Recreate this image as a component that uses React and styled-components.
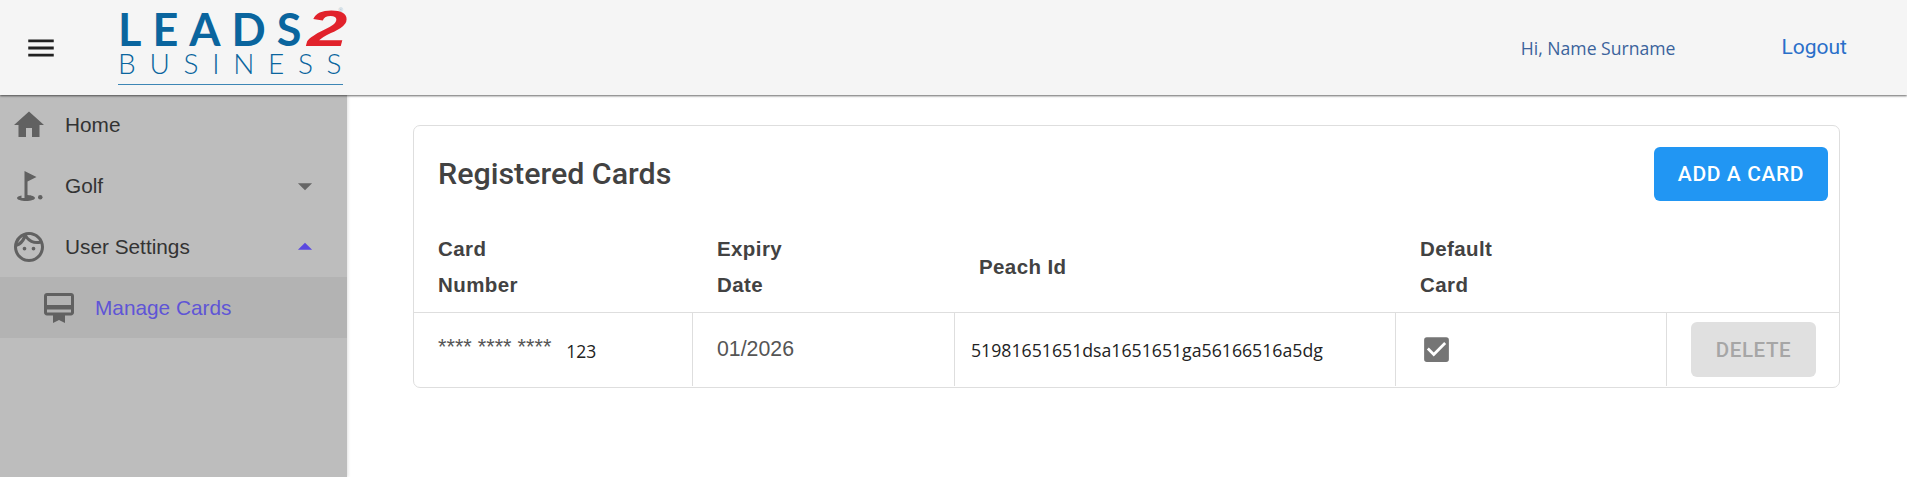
import React from "react";
import styled, { createGlobalStyle } from "styled-components";
import {
  MdMenu,
  MdHome,
  MdGolfCourse,
  MdOutlineFace,
  MdOutlineCardMembership,
  MdArrowDropDown,
  MdArrowDropUp,
  MdCheckBox,
} from "react-icons/md";

const GlobalStyle = createGlobalStyle`
  html, body {
    margin: 0;
    padding: 0;
    background: #fff;
    font-family: "Liberation Sans", Arial, sans-serif;
  }
  * {
    box-sizing: border-box;
  }
`;

const App = () => {
  return (
    <Page>
      <GlobalStyle />
      <Header>
        <MenuButton>
          <MdMenu size={34} />
        </MenuButton>
        <Logo>
          <LogoTop>
            <LogoLeads>
              LEAD<LogoLast>S</LogoLast>
            </LogoLeads>
            <LogoTwo>2</LogoTwo>
            <LogoMark>®</LogoMark>
          </LogoTop>
          <LogoBottom>BUSINESS</LogoBottom>
        </Logo>
        <Greeting>Hi, Name Surname</Greeting>
        <Logout>Logout</Logout>
      </Header>
      <Body>
        <Sidebar>
          <NavItem>
            <NavIcon>
              <MdHome size={36} />
            </NavIcon>
            <NavLabel>Home</NavLabel>
          </NavItem>
          <NavItem>
            <NavIcon>
              <MdGolfCourse size={36} />
            </NavIcon>
            <NavLabel>Golf</NavLabel>
            <Caret>
              <MdArrowDropDown size={34} />
            </Caret>
          </NavItem>
          <NavItem>
            <NavIcon>
              <MdOutlineFace size={36} />
            </NavIcon>
            <NavLabel>User Settings</NavLabel>
            <Caret $open>
              <MdArrowDropUp size={34} />
            </Caret>
          </NavItem>
          <NavItem $sub>
            <NavIcon>
              <MdOutlineCardMembership size={36} />
            </NavIcon>
            <NavLabel $active>Manage Cards</NavLabel>
          </NavItem>
        </Sidebar>
        <Main>
          <Card>
            <CardTop>
              <Title>Registered Cards</Title>
              <AddButton>ADD A CARD</AddButton>
            </CardTop>
            <HeadRow>
              <HeadCell>
                Card
                <br />
                Number
              </HeadCell>
              <HeadCell>
                Expiry
                <br />
                Date
              </HeadCell>
              <HeadCell>Peach Id</HeadCell>
              <HeadCell>
                Default
                <br />
                Card
              </HeadCell>
              <HeadCell />
            </HeadRow>
            <DataRow>
              <Cell>
                <Stars>**** **** ****</Stars>
                <LastDigits>123</LastDigits>
              </Cell>
              <Cell>
                <Expiry>01/2026</Expiry>
              </Cell>
              <Cell $tight>
                <PeachId>51981651651dsa1651651ga56166516a5dg</PeachId>
              </Cell>
              <Cell>
                <MdCheckBox size={33} color="#757575" />
              </Cell>
              <Cell $action>
                <DeleteButton disabled>DELETE</DeleteButton>
              </Cell>
            </DataRow>
          </Card>
        </Main>
      </Body>
    </Page>
  );
};

const Page = styled.div`
  display: flex;
  flex-direction: column;
  height: 100vh;
  overflow: hidden;
`;

const Header = styled.header`
  position: relative;
  z-index: 2;
  display: flex;
  align-items: center;
  flex: 0 0 95px;
  height: 95px;
  padding-left: 24px;
  background: #f5f5f5;
  box-shadow: 0 1px 2px rgba(0, 0, 0, 0.6);
`;

const MenuButton = styled.div`
  display: flex;
  width: 34px;
  height: 34px;
  margin-right: 60px;
  color: #212121;
`;

const Logo = styled.div`
  align-self: flex-start;
  width: 225px;
  height: 85px;
  padding-top: 5px;
  border-bottom: 1px solid #3d86b5;
  white-space: nowrap;
`;

const LogoTop = styled.div`
  display: flex;
  align-items: center;
  height: 48px;
`;

const LogoLeads = styled.span`
  font-family: "Lato", sans-serif;
  font-weight: 700;
  font-size: 45px;
  line-height: 48px;
  letter-spacing: 11px;
  color: #0a659e;
`;

// the 2 in the logo is much wider than any installed italic
const LogoTwo = styled.span`
  display: inline-block;
  width: 41px;
  margin-left: 6px;
  font-weight: 700;
  font-style: italic;
  font-size: 50px;
  line-height: 48px;
  color: #e1222b;
  transform: scaleX(1.45);
  transform-origin: left center;
`;

const LogoLast = styled.span`
  letter-spacing: 0;
`;

const LogoMark = styled.span`
  align-self: flex-start;
  margin-left: 2px;
  margin-top: 2px;
  font-size: 6px;
  color: #9bb7c9;
`;

const LogoBottom = styled.div`
  font-family: "Lato", sans-serif;
  font-weight: 300;
  font-size: 28px;
  line-height: 20px;
  letter-spacing: 13.7px;
  color: #0a659e;
`;

const Greeting = styled.div`
  margin-left: auto;
  margin-top: 1px;
  font-family: "Open Sans", sans-serif;
  font-size: 17.6px;
  color: #3b639c;
`;

const Logout = styled.div`
  margin-left: 106px;
  margin-right: 60px;
  margin-top: -2px;
  font-family: "Roboto", sans-serif;
  font-size: 21px;
  color: #2a6fc9;
`;

const Body = styled.div`
  display: flex;
  flex: 1;
  min-height: 0;
`;

const Sidebar = styled.nav`
  flex: 0 0 347px;
  background: #bdbdbd;
  box-shadow: 1px 0 3px rgba(0, 0, 0, 0.12);
`;

const NavItem = styled.div`
  display: flex;
  align-items: center;
  height: 61px;
  padding-left: ${(props) => (props.$sub ? "41px" : "11px")};
  background: ${(props) => (props.$sub ? "#b3b3b3" : "transparent")};

  &:first-child {
    height: 60px;
  }
`;

const NavIcon = styled.span`
  display: flex;
  width: 36px;
  margin-right: 18px;
  color: #616161;
`;

const NavLabel = styled.span`
  font-size: 20.8px;
  color: ${(props) => (props.$active ? "#5f55d6" : "#333")};
`;

const Caret = styled.span`
  display: flex;
  margin-left: auto;
  margin-right: 25px;
  color: ${(props) => (props.$open ? "#5a48e0" : "#666")};
`;

const Main = styled.main`
  flex: 1;
  padding: 30px 67px 0 66px;
`;

const Card = styled.section`
  height: 263px;
  border: 1px solid #dedede;
  border-radius: 7px;
  background: #fff;
`;

const CardTop = styled.div`
  display: flex;
  align-items: center;
  justify-content: space-between;
  height: 85px;
  padding: 10px 11px 0 24px;
`;

const Title = styled.h2`
  margin: 0;
  font-family: "Roboto", sans-serif;
  font-weight: 500;
  font-size: 30.4px;
  color: #424242;
`;

const AddButton = styled.button`
  width: 174px;
  height: 54px;
  border: 0;
  border-radius: 6px;
  background: #2196f3;
  color: #fff;
  font-family: "Roboto", sans-serif;
  font-weight: 500;
  font-size: 21px;
  letter-spacing: 0.6px;
`;

const columns = "279px 262px 441px 271px 1fr";

const HeadRow = styled.div`
  display: grid;
  grid-template-columns: ${columns};
  height: 102px;
  padding-top: 10px;
  border-bottom: 1px solid #dedede;
`;

const HeadCell = styled.div`
  align-self: center;
  padding-left: 24px;
  font-weight: 700;
  font-size: 20.5px;
  line-height: 36px;
  letter-spacing: 0.4px;
  color: #424242;
`;

const DataRow = styled.div`
  display: grid;
  grid-template-columns: ${columns};
  height: 73px;
`;

const Cell = styled.div`
  display: flex;
  align-items: center;
  padding-left: ${(props) => (props.$tight ? "16px" : "24px")};
  border-right: ${(props) => (props.$action ? "0" : "1px solid #dedede")};
`;

const Stars = styled.span`
  margin-top: -6px;
  font-size: 21.7px;
  color: #555;
`;

const LastDigits = styled.span`
  margin-left: 15px;
  margin-top: 2px;
  font-family: "Open Sans", sans-serif;
  font-size: 17.5px;
  color: #222;
`;

const Expiry = styled.span`
  margin-top: -1px;
  font-size: 21.3px;
  color: #555;
`;

const PeachId = styled.span`
  font-family: "Open Sans", sans-serif;
  font-size: 17.7px;
  color: #222;
`;

const DeleteButton = styled.button`
  width: 125px;
  height: 55px;
  border: 0;
  border-radius: 6px;
  background: #e0e0e0;
  color: #a6a6a6;
  font-family: "Roboto", sans-serif;
  font-weight: 500;
  font-size: 20.5px;
  letter-spacing: 0.6px;
`;

export default App;
